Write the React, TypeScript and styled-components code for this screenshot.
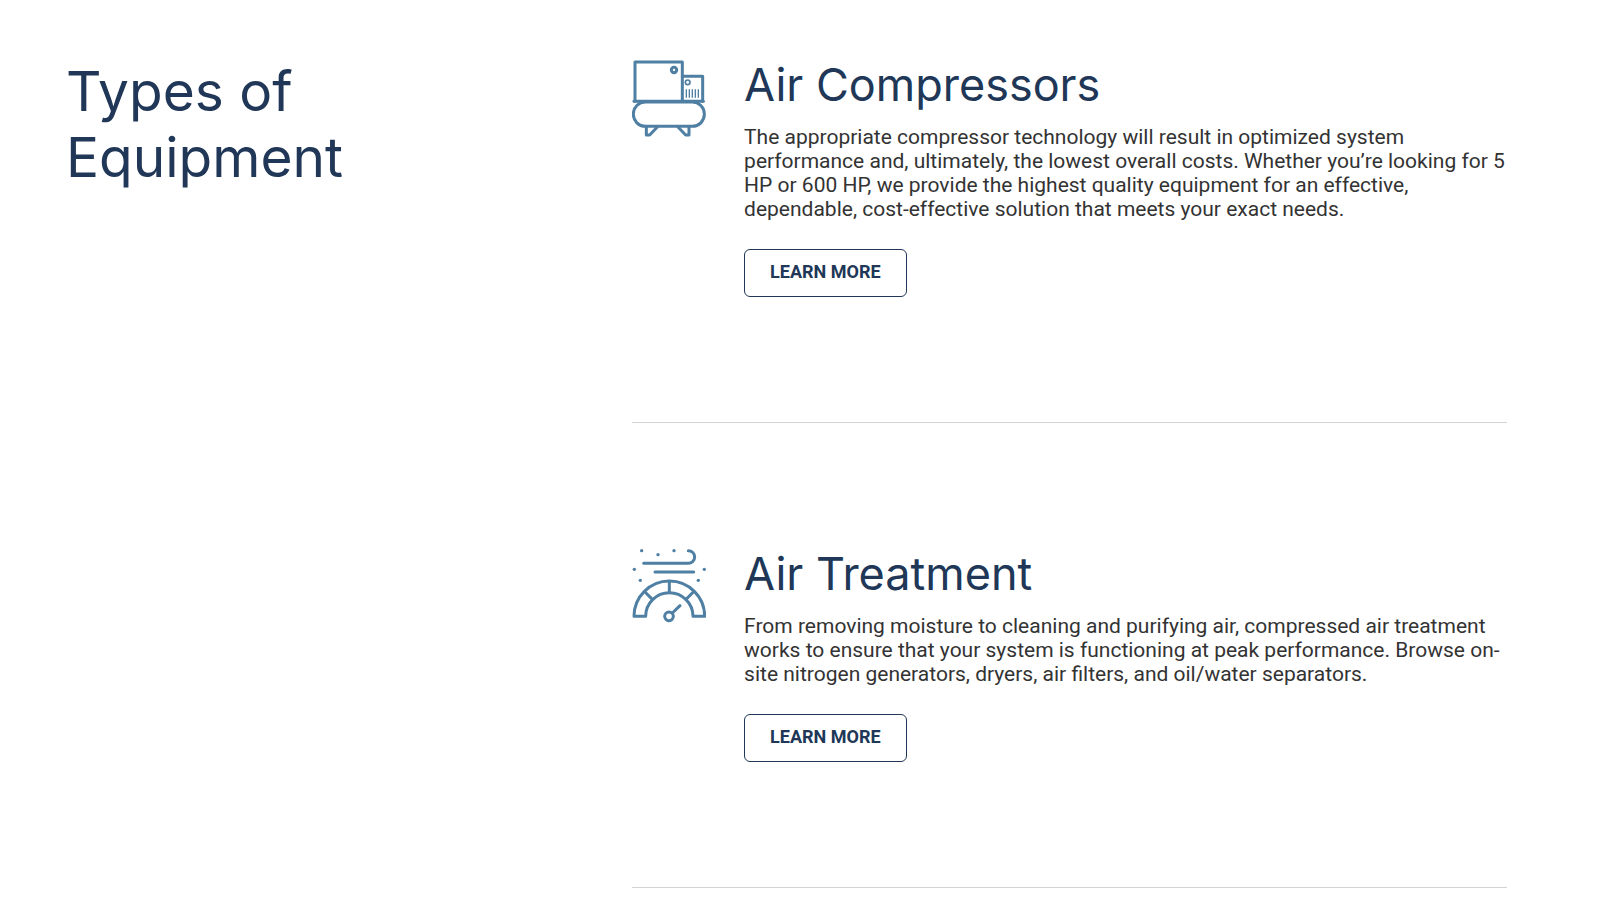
import React from "react";
import styled, { createGlobalStyle } from "styled-components";

const navy = "#203757";
const steel = "#4f7fa3";

const GlobalStyle = createGlobalStyle`
  *, *::before, *::after { box-sizing: border-box; }
  body { margin: 0; background: #fff; }
`;

const Section = styled.section`
  display: grid;
  grid-template-columns: 11fr 17fr;
  padding: 58px 100px 0 66px;
  color: ${navy};
`;

const SectionTitle = styled.h2`
  margin: 0;
  font: 400 55px/66px Inter, sans-serif;
`;

const EquipmentList = styled.div`
  display: flex;
  flex-direction: column;
  gap: 124px;
`;

const EquipmentItem = styled.article`
  display: flex;
  align-items: flex-start;
  gap: 38px;
  padding-bottom: 125px;
  border-bottom: 1px solid #d3d3d3;
`;

const Icon = styled.svg`
  flex: none;
  width: 74px;
  height: 80px;
  fill: none;
  stroke: ${steel};
  stroke-width: 9;
  stroke-linecap: round;
  stroke-linejoin: round;
`;

const ItemBody = styled.div`
  flex: 1;
  min-width: 0;
`;

const ItemTitle = styled.h3`
  margin: 0 0 13px;
  font: 400 45px/54px Inter, sans-serif;
`;

const ItemText = styled.p`
  margin: 0 0 28px;
  color: #333;
  font: 400 21px/24px Roboto, sans-serif;
`;

const LearnMore = styled.a`
  display: inline-flex;
  align-items: center;
  height: 48px;
  padding: 0 25px 2px;
  border: 1px solid ${navy};
  border-radius: 6px;
  color: ${navy};
  font: 700 18px/24px Roboto, sans-serif;
  text-decoration: none;
  text-transform: uppercase;
  vertical-align: top;
`;

const CompressorIcon = () => (
  <Icon viewBox="30 24 222 240" aria-hidden="true">
    <path d="M39 154V36H181V154" />
    <path d="M181 79H242V154" />
    <path d="M36 154H244" />
    <circle cx="156" cy="60" r="8" />
    <circle cx="197" cy="97" r="7" strokeWidth="5" />
    <path d="M193 118V143M202 118V143M211 118V143M220 118V143M229 118V143" strokeWidth="4" strokeLinecap="butt" />
    <rect x="34" y="156" width="213" height="73" rx="36" />
    <path d="M73 230V255H83L106 231" />
    <path d="M201 230V255H191L168 231" />
  </Icon>
);

const gaugeDots = [[59, 44], [108, 56], [156, 44], [37, 100], [247, 100], [55, 133], [229, 133]];

const TreatmentIcon = () => (
  <Icon viewBox="30 33 222 240" aria-hidden="true">
    {gaugeDots.map(([x, y]) => (
      <circle key={`${x}-${y}`} cx={x} cy={y} r="5" fill={steel} stroke="none" />
    ))}
    <path d="M65 82H199A19 19 0 0 0 199 44" />
    <path d="M99 108H215" />
    <path d="M36 241A106 106 0 0 1 248 241H213A71 71 0 0 0 71 241Z" />
    <path d="M142 136V168M69 168L91 190M214 168L192 190" />
    <circle cx="141" cy="241" r="13" />
    <path d="M151 231L174 209" />
  </Icon>
);

const items = [
  {
    title: "Air Compressors",
    href: "#air-compressors",
    icon: <CompressorIcon />,
    text: "The appropriate compressor technology will result in optimized system performance and, ultimately, the lowest overall costs. Whether you’re looking for 5 HP or 600 HP, we provide the highest quality equipment for an effective, dependable, cost-effective solution that meets your exact needs.",
  },
  {
    title: "Air Treatment",
    href: "#air-treatment",
    icon: <TreatmentIcon />,
    text: "From removing moisture to cleaning and purifying air, compressed air treatment works to ensure that your system is functioning at peak performance. Browse on-site nitrogen generators, dryers, air filters, and oil/water separators.",
  },
];

export default function App() {
  return (
    <>
      <GlobalStyle />
      <Section>
        <SectionTitle>
          Types of
          <br />
          Equipment
        </SectionTitle>
        <EquipmentList>
          {items.map((item) => (
            <EquipmentItem key={item.title}>
              {item.icon}
              <ItemBody>
                <ItemTitle>{item.title}</ItemTitle>
                <ItemText>{item.text}</ItemText>
                <LearnMore href={item.href}>Learn More</LearnMore>
              </ItemBody>
            </EquipmentItem>
          ))}
        </EquipmentList>
      </Section>
    </>
  );
}
